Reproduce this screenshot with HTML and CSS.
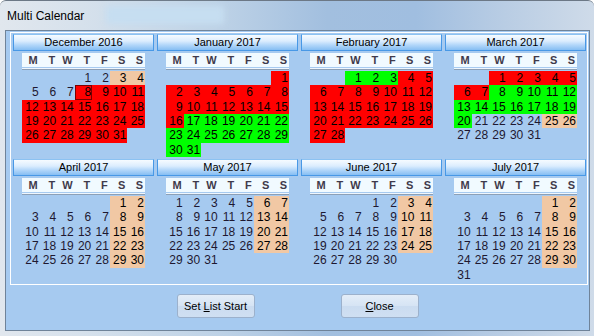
FILE: index.html
```html
<!DOCTYPE html>
<html>
<head>
<meta charset="utf-8">
<link rel="stylesheet" href="styles.css">
</head>
<body>
<div class="window">
  <div class="titlebar">
    <span class="title">Multi Calendar</span>
    <span class="glass"></span>
  </div>
  <div class="frame">
    <div class="client">
      <div class="panel">
        <div class="month">
          <div class="mhead">December 2016</div>
          <div class="dow"><span>M</span><span>T</span><span>W</span><span>T</span><span>F</span><span>S</span><span>S</span></div>
          <div class="rule"></div>
          <div class="days">
            <span class="c4">1</span><span>2</span><span class="p">3</span><span class="p">4</span>
            <span>5</span><span>6</span><span>7</span><span class="r t">8</span><span class="r">9</span><span class="r">10</span><span class="r">11</span>
            <span class="r">12</span><span class="r">13</span><span class="r">14</span><span class="r">15</span><span class="r">16</span><span class="r">17</span><span class="r">18</span>
            <span class="r">19</span><span class="r">20</span><span class="r">21</span><span class="r">22</span><span class="r">23</span><span class="r">24</span><span class="r">25</span>
            <span class="r">26</span><span class="r">27</span><span class="r">28</span><span class="r">29</span><span class="r">30</span><span class="r">31</span>
          </div>
        </div>
        <div class="month">
          <div class="mhead">January 2017</div>
          <div class="dow"><span>M</span><span>T</span><span>W</span><span>T</span><span>F</span><span>S</span><span>S</span></div>
          <div class="rule"></div>
          <div class="days">
            <span class="c7 r">1</span>
            <span class="r">2</span><span class="r">3</span><span class="r">4</span><span class="r">5</span><span class="r">6</span><span class="r">7</span><span class="r">8</span>
            <span class="r">9</span><span class="r">10</span><span class="r">11</span><span class="r">12</span><span class="r">13</span><span class="r">14</span><span class="r">15</span>
            <span class="r">16</span><span class="g">17</span><span class="g">18</span><span class="g">19</span><span class="g">20</span><span class="g">21</span><span class="g">22</span>
            <span class="g">23</span><span class="g">24</span><span class="g">25</span><span class="g">26</span><span class="g">27</span><span class="g">28</span><span class="g">29</span>
            <span class="g">30</span><span class="g">31</span>
          </div>
        </div>
        <div class="month">
          <div class="mhead">February 2017</div>
          <div class="dow"><span>M</span><span>T</span><span>W</span><span>T</span><span>F</span><span>S</span><span>S</span></div>
          <div class="rule"></div>
          <div class="days">
            <span class="c3 g">1</span><span class="g">2</span><span class="g">3</span><span class="r">4</span><span class="r">5</span>
            <span class="r">6</span><span class="r">7</span><span class="r">8</span><span class="r">9</span><span class="r">10</span><span class="r">11</span><span class="r">12</span>
            <span class="r">13</span><span class="r">14</span><span class="r">15</span><span class="r">16</span><span class="r">17</span><span class="r">18</span><span class="r">19</span>
            <span class="r">20</span><span class="r">21</span><span class="r">22</span><span class="r">23</span><span class="r">24</span><span class="r">25</span><span class="r">26</span>
            <span class="r">27</span><span class="r">28</span>
          </div>
        </div>
        <div class="month">
          <div class="mhead">March 2017</div>
          <div class="dow"><span>M</span><span>T</span><span>W</span><span>T</span><span>F</span><span>S</span><span>S</span></div>
          <div class="rule"></div>
          <div class="days">
            <span class="c3 r">1</span><span class="r">2</span><span class="r">3</span><span class="r">4</span><span class="r">5</span>
            <span class="r">6</span><span class="r">7</span><span class="g">8</span><span class="g">9</span><span class="g">10</span><span class="g">11</span><span class="g">12</span>
            <span class="g">13</span><span class="g">14</span><span class="g">15</span><span class="g">16</span><span class="g">17</span><span class="g">18</span><span class="g">19</span>
            <span class="g">20</span><span>21</span><span>22</span><span>23</span><span>24</span><span class="p">25</span><span class="p">26</span>
            <span>27</span><span>28</span><span>29</span><span>30</span><span>31</span>
          </div>
        </div>

        <div class="month">
          <div class="mhead">April 2017</div>
          <div class="dow"><span>M</span><span>T</span><span>W</span><span>T</span><span>F</span><span>S</span><span>S</span></div>
          <div class="rule"></div>
          <div class="days">
            <span class="c6 p">1</span><span class="p">2</span>
            <span>3</span><span>4</span><span>5</span><span>6</span><span>7</span><span class="p">8</span><span class="p">9</span>
            <span>10</span><span>11</span><span>12</span><span>13</span><span>14</span><span class="p">15</span><span class="p">16</span>
            <span>17</span><span>18</span><span>19</span><span>20</span><span>21</span><span class="p">22</span><span class="p">23</span>
            <span>24</span><span>25</span><span>26</span><span>27</span><span>28</span><span class="p">29</span><span class="p">30</span>
          </div>
        </div>
        <div class="month">
          <div class="mhead">May 2017</div>
          <div class="dow"><span>M</span><span>T</span><span>W</span><span>T</span><span>F</span><span>S</span><span>S</span></div>
          <div class="rule"></div>
          <div class="days">
            <span>1</span><span>2</span><span>3</span><span>4</span><span>5</span><span class="p">6</span><span class="p">7</span>
            <span>8</span><span>9</span><span>10</span><span>11</span><span>12</span><span class="p">13</span><span class="p">14</span>
            <span>15</span><span>16</span><span>17</span><span>18</span><span>19</span><span class="p">20</span><span class="p">21</span>
            <span>22</span><span>23</span><span>24</span><span>25</span><span>26</span><span class="p">27</span><span class="p">28</span>
            <span>29</span><span>30</span><span>31</span>
          </div>
        </div>
        <div class="month">
          <div class="mhead">June 2017</div>
          <div class="dow"><span>M</span><span>T</span><span>W</span><span>T</span><span>F</span><span>S</span><span>S</span></div>
          <div class="rule"></div>
          <div class="days">
            <span class="c4">1</span><span>2</span><span class="p">3</span><span class="p">4</span>
            <span>5</span><span>6</span><span>7</span><span>8</span><span>9</span><span class="p">10</span><span class="p">11</span>
            <span>12</span><span>13</span><span>14</span><span>15</span><span>16</span><span class="p">17</span><span class="p">18</span>
            <span>19</span><span>20</span><span>21</span><span>22</span><span>23</span><span class="p">24</span><span class="p">25</span>
            <span>26</span><span>27</span><span>28</span><span>29</span><span>30</span>
          </div>
        </div>
        <div class="month">
          <div class="mhead">July 2017</div>
          <div class="dow"><span>M</span><span>T</span><span>W</span><span>T</span><span>F</span><span>S</span><span>S</span></div>
          <div class="rule"></div>
          <div class="days">
            <span class="c6 p">1</span><span class="p">2</span>
            <span>3</span><span>4</span><span>5</span><span>6</span><span>7</span><span class="p">8</span><span class="p">9</span>
            <span>10</span><span>11</span><span>12</span><span>13</span><span>14</span><span class="p">15</span><span class="p">16</span>
            <span>17</span><span>18</span><span>19</span><span>20</span><span>21</span><span class="p">22</span><span class="p">23</span>
            <span>24</span><span>25</span><span>26</span><span>27</span><span>28</span><span class="p">29</span><span class="p">30</span>
            <span>31</span>
          </div>
        </div>
      </div>
      <div class="buttons">
        <button class="btn">Set <u>L</u>ist Start</button>
        <button class="btn"><u>C</u>lose</button>
      </div>
    </div>
  </div>
</div>
</body>
</html>
```
FILE: styles.css
```css
html, body {
  margin: 0;
  padding: 0;
  background: #ffffff;
}
body {
  width: 594px;
  height: 336px;
  overflow: hidden;
  font-family: "Liberation Sans", Arial, sans-serif;
}
.window {
  width: 594px;
  height: 336px;
  box-sizing: border-box;
  display: flex;
  flex-direction: column;
  border-top: 1px solid #6c7886;
  border-radius: 6px 6px 0 0;
  background: linear-gradient(90deg, #e1e7ee 0%, #d6e1ec 14%, #bcd1e6 38%, #a2bfdf 55%, #a0bee0 70%, #b9cde4 85%, #cfdbe9 100%);
}
.titlebar {
  height: 29px;
  display: flex;
  align-items: flex-start;
  padding: 8px 0 0 7px;
  box-sizing: border-box;
}
.title {
  font-size: 12px;
  line-height: 14px;
  color: #000;
}
.glass {
  width: 118px;
  height: 18px;
  margin: -3px 0 0 22px;
  background: #c6def1;
  filter: blur(3px);
}
.frame {
  flex: 1;
  display: flex;
  padding: 0 4px 5px 5px;
}
.client {
  flex: 1;
  border: 1px solid #6f8399;
  background: #a6caf0;
  display: flex;
  flex-direction: column;
}
.panel {
  margin: 1px 1px 0 4px;
  border: 1px solid #ffffff;
  padding: 1px 0 2px 2px;
  display: grid;
  grid-template-columns: repeat(4, 141px);
  column-gap: 3px;
  row-gap: 2px;
}
.month {
  display: flex;
  flex-direction: column;
  align-items: center;
}
.mhead {
  align-self: stretch;
  height: 17px;
  box-sizing: border-box;
  border: 1px solid #4898e6;
  border-top-color: #8cc2f2;
  background: linear-gradient(#f6fbff 0%, #dcedfe 40%, #b5d8fa 65%, #86bef3 100%);
  font-size: 11px;
  line-height: 15px;
  text-align: center;
  color: #000;
  margin-bottom: 2px;
}
.dow {
  width: 123px;
  height: 14px;
  background: #f1faff;
  display: grid;
  grid-template-columns: repeat(7, 1fr);
  font-size: 11px;
  font-weight: bold;
  line-height: 14px;
  color: #3f3a4c;
}
.dow span {
  text-align: right;
  padding-right: 2px;
}
.rule {
  width: 123px;
  height: 2px;
  margin: 1px 0 1px 0;
  background: #eef6fe;
  border-bottom: 1px solid #8da0b6;
  box-sizing: border-box;
}
.days {
  width: 123px;
  height: 86px;
  display: grid;
  grid-template-columns: repeat(7, 1fr);
  grid-template-rows: repeat(6, 1fr);
  font-size: 12px;
  color: #1e1830;
}
.days span {
  text-align: right;
  padding-right: 1px;
  line-height: 14px;
  box-sizing: border-box;
}
.days .r { background: #ff0000; color: #000; }
.days .g { background: #00ff00; color: #000; }
.days .p { background: #f1c8a4; color: #000; }
.days .t { box-shadow: inset 0 0 0 1px #7a0000; }
.c3 { grid-column-start: 3; }
.c4 { grid-column-start: 4; }
.c6 { grid-column-start: 6; }
.c7 { grid-column-start: 7; }
.buttons {
  display: flex;
  justify-content: center;
  gap: 86px;
  margin-top: 9px;
}
.btn {
  width: 78px;
  height: 24px;
  padding: 0;
  border: 1px solid #9cb1cc;
  border-radius: 3px;
  background: linear-gradient(#e3edf8 0%, #d6e4f4 48%, #cbdcf0 52%, #cfdff2 100%);
  font-family: "Liberation Sans", Arial, sans-serif;
  font-size: 11px;
  color: #000;
}
```
